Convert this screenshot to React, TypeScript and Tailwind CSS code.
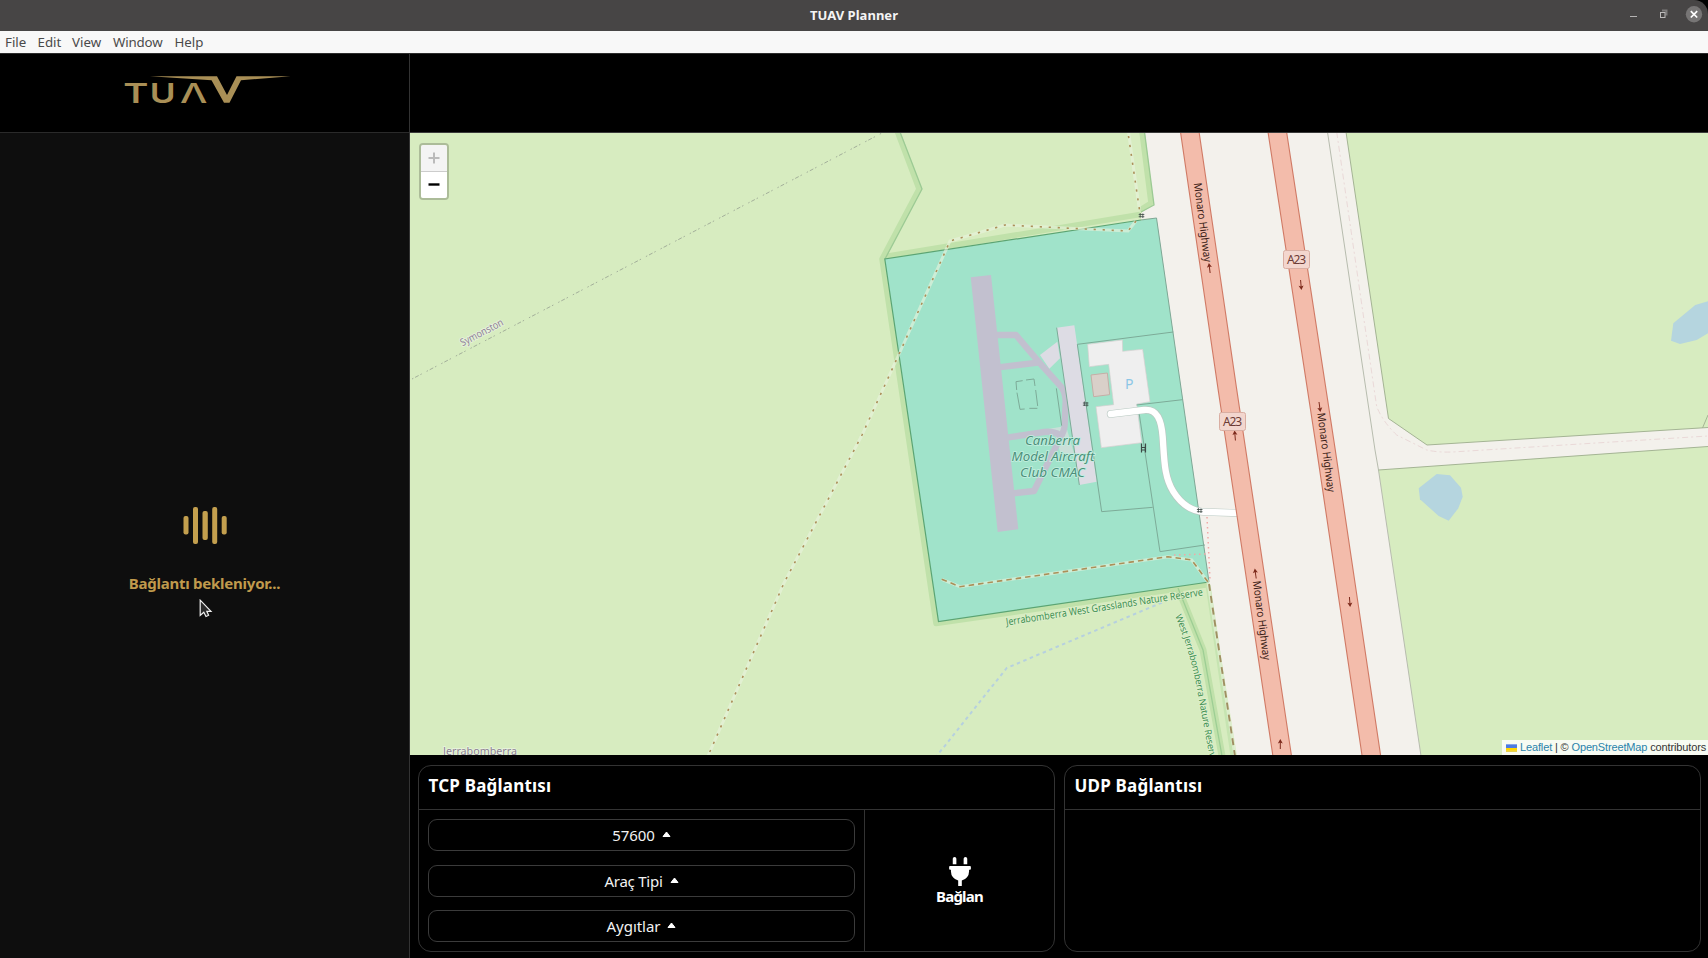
import React from "react";
import { FaPlug } from "react-icons/fa";

const UI_FONT = "font-['Noto_Sans','Open_Sans',sans-serif]";

function TitleBar() {
  return (
    <header className="h-[31px] shrink-0 bg-black">
      <div className="grid h-full grid-cols-[1fr_auto_1fr] items-center rounded-tr-[14px] bg-[#474545]">
        <span />
        <h1 className="pb-[2px] text-[13px] leading-5 font-bold tracking-[0.02px] text-[#f4f4f4]">TUAV Planner</h1>
        <svg className="h-[31px] w-[90px] justify-self-end" viewBox="1618 0 90 31" fill="none">
          <path d="M1630 16.500h7" stroke="#b5b3b3" />
          <path d="M1662 10.500h4.500v5" stroke="#7d7b7b" strokeWidth="2" />
          <rect x="1660.500" y="12.500" width="4.500" height="5" stroke="#bdbbbb" />
          <circle cx="1694" cy="14.300" r="8.200" fill="#777575" />
          <path d="M1690.800 11.100l6.400 6.400m0-6.400l-6.400 6.400" stroke="#fff" strokeWidth="1.700" />
        </svg>
      </div>
    </header>
  );
}

function MenuBar() {
  return (
    <nav className="flex h-[22px] shrink-0 items-center bg-[#f8f8f8] pb-px pl-[5px] text-[13.300px] leading-4 text-[#4a4a4a]">
      <span className="w-[32.500px]">File</span>
      <span className="w-[34.500px]">Edit</span>
      <span className="w-[41px]">View</span>
      <span className="w-[61.500px] tracking-[-0.150px]">Window</span>
      <span>Help</span>
    </nav>
  );
}

function Logo() {
  return (
    <svg className="mt-[22px] ml-[123px] h-[27px] w-[170px] overflow-visible" viewBox="123 76 170 27" fill="#a98f56">
      <g className="font-['Inter',sans-serif] text-[27px]">
        <text transform="translate(123.200 102.700) scale(1.410 1)" fontWeight="600">T</text>
        <text transform="translate(149.800 102.500) scale(1.300 1)" fontWeight="600">U</text>
        <text transform="translate(180 102.700) scale(1.430 1)" fontWeight="500">Λ</text>
      </g>
      <path d="M150 76.300H217L227 95L236.500 76.300H290.500L241 80.300L229.500 102.700H224L211.500 80.300Z" />
    </svg>
  );
}

function Cursor() {
  return (
    <svg className="absolute top-[599px] left-[199px] h-[19px] w-[14px]" viewBox="0 0 14 19">
      <path
        d="M1.200 1.200V16.500L4.800 13.200L7 17.500L9.600 16.300L7.800 12.300H12Z"
        fill="#2b2b2b"
        stroke="#f0f0f0"
        strokeWidth="1.200"
      />
    </svg>
  );
}

function Waiting() {
  return (
    <div className="flex h-full flex-col items-center bg-[#0e0e0e] pt-[373px] text-[#c09a4c]">
      <svg className="h-[38px] w-[46px]" viewBox="0 0 46 38" fill="#c39f4e">
        <rect x="1.500" y="10" width="5" height="18.500" rx="2" />
        <rect x="11" y="1" width="5" height="37" rx="2" />
        <rect x="20.500" y="5" width="5.300" height="29" rx="2" />
        <rect x="30.200" y="1" width="5" height="37" rx="2" />
        <rect x="39.700" y="10" width="5" height="18.500" rx="2" />
      </svg>
      <p className="mt-[27px] text-[15px] leading-6 font-bold tracking-[-0.24px]">Bağlantı bekleniyor...</p>
    </div>
  );
}

function Arrow({ x, y, angle }: { x: number; y: number; angle: number }) {
  return (
    <g transform={`translate(${x} ${y}) rotate(${angle})`}>
      <path d="M0 5V-3" stroke="#7d2a1c" strokeWidth="1" />
      <path d="M0 -5L2.500 -0.600L0 -1.600L-2.500 -0.600Z" fill="#7d2a1c" />
    </g>
  );
}

function Shield({ x, y }: { x: number; y: number }) {
  return (
    <g transform={`translate(${x} ${y})`}>
      <rect x="-13" y="-9" width="26" height="18" rx="2" fill="#f3d6ce" stroke="#d9aea2" />
      <text y="4.500" textAnchor="middle" textLength="19" className="text-[12px]" fill="#6d3b35">
        A23
      </text>
    </g>
  );
}

function HighwayLabel({ x, y }: { x: number; y: number }) {
  return (
    <text
      transform={`translate(${x} ${y}) rotate(82.500)`}
      textAnchor="middle"
      dy="3"
      textLength="80"
      lengthAdjust="spacingAndGlyphs"
      className="text-[11px]"
      fill="#3b1d17"
    >
      Monaro Highway
    </text>
  );
}

function Gate({ x, y, tall = false }: { x: number; y: number; tall?: boolean }) {
  return (
    <g transform={`translate(${x} ${y})`} stroke="#3d4a46" fill="none">
      {tall ? (
        <path d="M-2 -4.500V4.500M2 -4.500V4.500M-2 -0.500H2M-2 2H2" strokeWidth="1.200" />
      ) : (
        <path d="M-1.300 -2.500V2M1.300 -2V2.500M-2.800 -1H2.800M-2.800 1.200H2.800" strokeWidth="0.800" />
      )}
    </g>
  );
}

function MapCanvas() {
  return (
    <svg
      className="block h-full w-full font-['Noto_Sans',sans-serif]"
      viewBox="410 133 1298 622"
      preserveAspectRatio="none"
      fill="none"
    >
      <rect x="410" y="132" width="1298" height="624" fill="#d7ecc0" />

      {/* road reserve */}
      <path d="M1144 132L1154 205L1142 212L1141 219L1156.500 218L1209 582L1237 756H1421L1378.500 470L1708 446.500V427.500L1427 445L1388.500 418.500L1346 132Z" fill="#f3f1ec" />
      <path d="M1327.500 132L1375 450L1378.500 470L1421 756" stroke="#b7bcae" />
      <path d="M1346 132L1388.500 418.500L1427 445L1708 427.500M1378.500 470L1708 446.500M1702.500 428L1708 415" stroke="#a4b494" />
      <path d="M1336.700 132L1363 313L1376.700 406.700Q1383 422 1396.700 435L1426.700 450Q1440 453 1457 451.700L1708 436" stroke="#ead9d8" strokeDasharray="6 3 2 3" />

      {/* water */}
      <path d="M1671 340.700L1673.300 323.300L1695.300 305L1708 301.300V333.300L1696.700 340L1680 344Z" fill="#b5d5df" />
      <path d="M1418.700 488.300L1436.700 474L1450 475.300L1461 487.700L1462.700 496.700L1458.300 508.300L1448.700 520.700L1438.700 516L1420 499.300Z" fill="#b5d5df" />

      {/* nature reserve borders */}
      <g stroke="#c0e1aa" strokeWidth="5.500" strokeLinejoin="round">
        <path d="M897.500 132L919 189L882 259L936 623.500L1209 584.500" />
        <path d="M885 256.500L1140 214.500" />
        <path d="M1142 132L1151 203L1140 210" />
        <path d="M1178 588L1203 650L1222 756" strokeWidth="7" />
        <path d="M1208 585L1233 756" stroke="#c6e4b1" strokeWidth="5" />
      </g>
      <path d="M900 132L922 189L885 259M1144.500 132L1154 205L1141 212" stroke="#9cca94" strokeWidth="1.300" />
      <path d="M1178 588L1203 650L1222 756" stroke="#9dce94" strokeWidth="1.300" />

      {/* airfield */}
      <path d="M884.800 259L1156.500 218L1209 582L938.500 621.500Z" fill="#a0e3ca" />
      <path d="M1141 220L884.800 259L938.500 621.500L1209 582" stroke="#5ba473" strokeWidth="1.200" />
      <path d="M1141 220L1156.500 218L1209 582" stroke="#7fa796" />

      <path d="M970.700 277.300L991 275L1018.300 529.300L997.700 532Z" fill="#c2c0cf" />
      <g transform="translate(960 310) scale(0.33333)">
        <path d="M240 135L292 95L300 145L268 176Z" fill="#dddce4" />
        <path d="M245 360L318 348L345 440L300 425L285 372Z" fill="#c9dfd8" />
        <g stroke="#c2c0cf" strokeWidth="19" strokeLinejoin="round">
          <path d="M105 75H168L240 160L303 230Q316 245 317 275L314 345Q314 360 300 385L222 543L160 550" />
          <path d="M115 172L240 157" />
          <path d="M140 383L240 368Q275 360 300 375" />
        </g>
        <path d="M290 53L343 46L410 515L358 525Z" fill="#dddce4" />
        <path d="M383 103L487 90L488 124L548 118L570 275L530 282L545 398L424 413L408 290L461 284L446 163L388 170Z" fill="#efefef" stroke="#d8cfd0" strokeWidth="2" />
        <path d="M393 195L442 189L449 254L401 260Z" fill="#d9d0c9" stroke="#c5aea6" strokeWidth="3" />
        <g stroke="#7cab98" strokeWidth="3">
          <path d="M640 66L352 103L425 605L578 592" />
          <path d="M668 269L530 285M536 300L600 725L735 705" />
          <path d="M170 240L168 215L188 212M198 210L222 207L225 228M227 240L233 288M232 295H208M194 297L180 298L171 248" />
          <path d="M290 53L358 525M289 235L305 347" />
        </g>
        <path d="M452 312L552 300C592 296 604 330 608 380C613 450 612 500 640 545C665 585 700 606 740 606L832 609" stroke="#b9c9c2" strokeWidth="23" strokeLinecap="round" />
        <path d="M452 312L552 300C592 296 604 330 608 380C613 450 612 500 640 545C665 585 700 606 740 606L840 609" stroke="#fff" strokeWidth="19" strokeLinecap="round" />
      </g>

      {/* highways */}
      <g stroke="#d07a65" strokeWidth="19.500">
        <path d="M1189.500 130L1227.500 390L1282.500 758" />
        <path d="M1277 130L1326 450L1371.700 758" />
      </g>
      <g stroke="#f3bcab" strokeWidth="17.300">
        <path d="M1189.500 130L1227.500 390L1282.500 758" />
        <path d="M1277 130L1326 450L1371.700 758" />
      </g>

      {/* tracks and footpaths */}
      <g stroke="#e9f3dd" strokeOpacity="0.600" strokeWidth="3">
        <path d="M1128.500 132L1139.500 210M1136 221L1128 231L1085 229L1005 225L950 241L900 352L862 435L784 583L708 756" />
        <path d="M941.700 579.300L960 586.700L1168 556.700L1191.700 560L1208 582L1235 756" />
      </g>
      <g stroke="#ab8f58" strokeWidth="1.600">
        <path d="M1128.500 136L1139.500 210M1136 221L1128 231L1085 229L1005 225L950 241L900 352L862 435L784 583L708 756" strokeDasharray="2.200 6.800" />
        <path d="M941.700 579.300L960 586.700L1168 556.700L1191.700 560L1208 582" strokeDasharray="5.500 4" />
        <path d="M1209 584L1235 756" stroke="#a08f62" strokeWidth="1.900" strokeDasharray="7 5" />
      </g>
      <path d="M1207 517L1210 580M1174 555L1207 554" stroke="#f0a9a6" strokeWidth="1.500" strokeDasharray="1.500 3.500" />
      <path d="M1162 602.500L1006.700 668L936.700 756" stroke="#b6d0df" strokeWidth="2" strokeDasharray="3.500 3.500" />
      <path d="M412 379L882 133" stroke="#a3af9a" strokeDasharray="1.500 2 4 2 1.500 5.500" />

      <Gate x={1141.500} y={215.500} />
      <Gate x={1085.700} y={404} />
      <Gate x={1199.700} y={510.500} />
      <Gate x={1143.500} y={448} tall />

      <Arrow x={1209.500} y={268} angle={-7} />
      <Arrow x={1235} y={435.500} angle={-5} />
      <Arrow x={1255.500} y={573.500} angle={-8} />
      <Arrow x={1280.300} y={744} angle={0} />
      <Arrow x={1301} y={285} angle={175} />
      <Arrow x={1319.700} y={407} angle={172} />
      <Arrow x={1349.800} y={602} angle={176} />

      <Shield x={1296.500} y={259.500} />
      <Shield x={1232.500} y={421.500} />
      <HighwayLabel x={1202} y={222.500} />
      <HighwayLabel x={1325.500} y={452.500} />
      <HighwayLabel x={1261} y={620.500} />

      <g className="text-[13px] italic" fill="#4c8f7a" stroke="#c4efe0" strokeWidth="1.600" paintOrder="stroke" textAnchor="middle">
        <text x="1052.500" y="444.500" textLength="55" lengthAdjust="spacingAndGlyphs">Canberra</text>
        <text x="1053" y="460.500" textLength="83" lengthAdjust="spacingAndGlyphs">Model Aircraft</text>
        <text x="1052.500" y="476.500" textLength="65" lengthAdjust="spacingAndGlyphs">Club CMAC</text>
      </g>
      <text x="1125" y="389" className="text-[14px]" fill="#8cc6e6">P</text>

      <g className="text-[10.500px]" fill="#3f9152" stroke="#e0f0cf" strokeWidth="1.500" paintOrder="stroke">
        <text transform="translate(1006.500 625.500) rotate(-8.700)" textLength="199" lengthAdjust="spacingAndGlyphs">
          Jerrabomberra West Grasslands Nature Reserve
        </text>
        <path id="west-reserve" d="M1175 616Q1191 652 1199 700L1213 775" stroke="none" fill="none" />
        <text className="text-[9.400px] tracking-[-0.250px]">
          <textPath href="#west-reserve">West Jerrabomberra Nature Reserve</textPath>
        </text>
      </g>
      <g fill="#8c7f93" stroke="#eaf4e0" strokeWidth="1.600" paintOrder="stroke">
        <text transform="translate(462.500 346.500) rotate(-27.500)" textLength="47" lengthAdjust="spacingAndGlyphs" className="text-[10.500px]">
          Symonston
        </text>
        <text x="443" y="755" textLength="74" lengthAdjust="spacingAndGlyphs" className="text-[11px]">Jerrabomberra</text>
      </g>
    </svg>
  );
}

function MapView() {
  return (
    <section className="relative h-[623px] shrink-0 border-t border-[#3a3a3a]">
      <MapCanvas />
      <div className="absolute top-[10px] left-[9px] flex w-[30px] flex-col rounded-[4px] border-2 border-black/20 bg-clip-padding">
        <button className="flex h-[27px] items-center justify-center rounded-t-[2px] border-b border-[#ccc] bg-[#f4f4f4]">
          <svg className="h-3 w-3" viewBox="0 0 12 12" stroke="#bbb" strokeWidth="2">
            <path d="M6 0.500V11.500M0.500 6H11.500" />
          </svg>
        </button>
        <button className="flex h-[26px] items-center justify-center rounded-b-[2px] bg-white">
          <svg className="h-3 w-3" viewBox="0 0 12 12" stroke="#000" strokeWidth="2.400">
            <path d="M0.500 5.500H11.500" />
          </svg>
        </button>
      </div>
      <div className="absolute right-0 bottom-0 flex h-[15px] w-[206px] items-center gap-[3px] bg-white/80 pl-[4px] font-['Liberation_Sans',sans-serif] text-[11px] leading-[15px] whitespace-nowrap text-[#333]">
        <svg className="h-2 w-[11px]" viewBox="0 0 12 8">
          <path fill="#4C7BE1" d="M0 0h12v4H0z" />
          <path fill="#FFD500" d="M0 4h12v3H0z" />
          <path fill="#E0BC00" d="M0 7h12v1H0z" />
        </svg>
        <span className="tracking-[-0.140px]">
          <a className="text-[#2a83ab]">Leaflet</a> | © <a className="text-[#2a83ab]">OpenStreetMap</a> contributors
        </span>
      </div>
    </section>
  );
}

function SelectButton({ children }: { children: React.ReactNode }) {
  return (
    <button className="flex h-[32px] items-center justify-center gap-[7px] rounded-[9px] border border-[#3b3b3b] text-[15px] leading-5 text-[#f2f2f2]">
      {children}
      <svg className="mb-px h-[7px] w-[9px]" viewBox="0 0 9 7">
        <path d="M4.500 1L8 5.500H1Z" fill="#fff" stroke="#fff" strokeLinejoin="round" />
      </svg>
    </button>
  );
}

function Card({ title, children }: { title: string; children?: React.ReactNode }) {
  return (
    <section className="flex min-w-0 flex-1 flex-col overflow-hidden rounded-[13px] border border-[#333]">
      <h2 className="h-[44px] shrink-0 border-b border-[#333] pt-[6px] pl-[9.500px] text-[17px] leading-7 font-bold tracking-[0.200px] text-white">
        {title}
      </h2>
      <div className="flex min-h-0 flex-1">{children}</div>
    </section>
  );
}

export default function App() {
  return (
    <div className={`relative flex h-[958px] w-[1708px] flex-col overflow-hidden bg-black ${UI_FONT}`}>
      <TitleBar />
      <MenuBar />
      <div className="flex min-h-0 flex-1 border-t border-[#2c2c2c]">
        <aside className="flex w-[410px] shrink-0 flex-col border-r border-[#333]">
          <div className="h-[79px] shrink-0 border-b border-[#2a2a2a]">
            <Logo />
          </div>
          <Waiting />
        </aside>
        <main className="flex min-w-0 flex-1 flex-col">
          <div className="h-[78px] shrink-0" />
          <MapView />
          <div className="flex min-h-0 flex-1 gap-[9px] pt-[10px] pr-[7px] pb-[6px] pl-[8px]">
            <Card title="TCP Bağlantısı">
              <div className="flex flex-1 flex-col justify-between border-r border-[#333] px-[9px] py-[9px]">
                <SelectButton><span className="tracking-[-0.050px]">57600</span></SelectButton>
                <SelectButton><span className="tracking-[-0.250px]">Araç Tipi</span></SelectButton>
                <SelectButton><span className="tracking-[-0.050px]">Aygıtlar</span></SelectButton>
              </div>
              <button className="flex w-[189px] flex-col items-center justify-center text-[15px] font-bold text-white">
                <FaPlug className="mt-[3px] h-[29px] w-[22px]" />
                <span className="leading-[21px] tracking-[-0.750px]">Bağlan</span>
              </button>
            </Card>
            <Card title="UDP Bağlantısı" />
          </div>
        </main>
      </div>
      <Cursor />
    </div>
  );
}
